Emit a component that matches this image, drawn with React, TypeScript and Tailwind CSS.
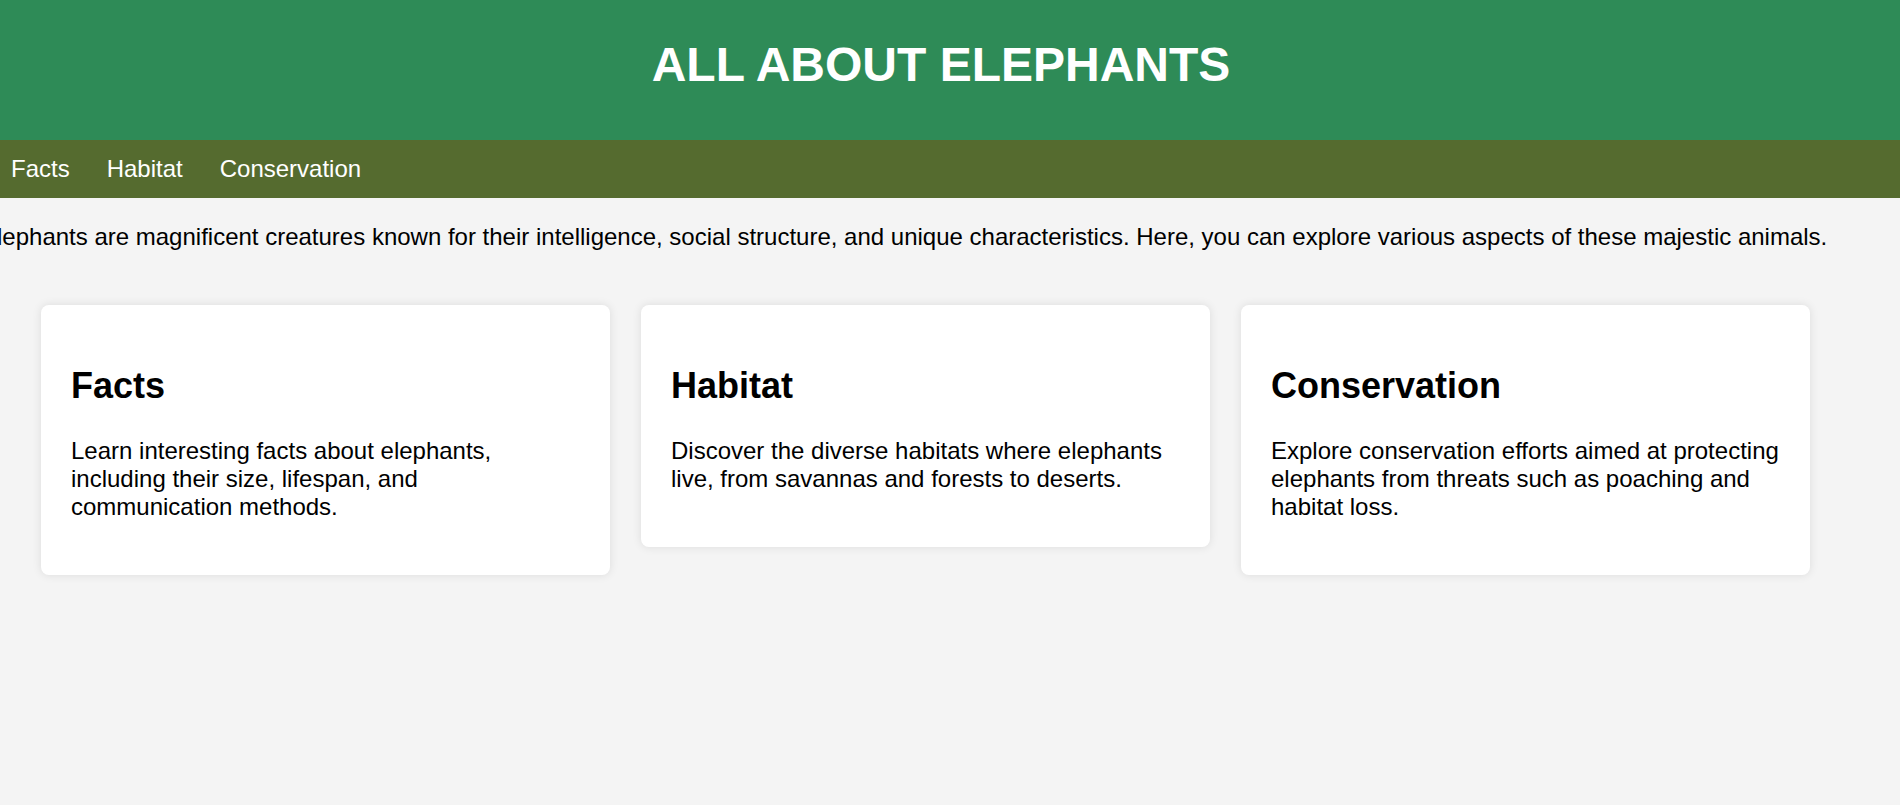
const cards = [
  {
    title: "Facts",
    text: "Learn interesting facts about elephants, including their size, lifespan, and communication methods.",
  },
  {
    title: "Habitat",
    text: "Discover the diverse habitats where elephants live, from savannas and forests to deserts.",
  },
  {
    title: "Conservation",
    text: "Explore conservation efforts aimed at protecting elephants from threats such as poaching and habitat loss.",
  },
];

export default function App() {
  return (
    <div className="min-h-screen w-full overflow-hidden bg-[#f4f4f4] font-['Liberation_Sans',Arial,sans-serif] text-[24px] leading-[normal] text-black">
      {/* page is scrolled a little to the right */}
      <div className="-ml-[22px] w-[1922px]">
        <header className="h-[140px] bg-[#2e8b57] pt-[37px] pl-[4px] text-center text-white">
          <h1 className="text-[48px] font-bold leading-[normal]">ALL ABOUT ELEPHANTS</h1>
        </header>

        <nav className="flex gap-[37px] bg-[#556b2f] py-[15px] pl-[33px]">
          <a href="#facts" className="text-white no-underline">
            Facts
          </a>
          <a href="#habitat" className="text-white no-underline">
            Habitat
          </a>
          <a href="#conservation" className="text-white no-underline">
            Conservation
          </a>
        </nav>

        <p className="mt-[25px] whitespace-nowrap pl-[3px]">
          Elephants are magnificent creatures known for their intelligence, social structure, and unique
          characteristics. Here, you can explore various aspects of these majestic animals.
        </p>

        <div className="mt-[54px] flex items-start gap-[31px] pl-[63px]">
          {cards.map((card) => (
            <section
              key={card.title}
              className="w-[569px] rounded-[8px] bg-white p-[30px] shadow-[0_0_10px_rgba(0,0,0,0.1)]"
            >
              <h2 className="my-[30px] text-[36px] font-bold leading-[normal]">{card.title}</h2>
              <p className="my-[24px]">{card.text}</p>
            </section>
          ))}
        </div>
      </div>
    </div>
  );
}
